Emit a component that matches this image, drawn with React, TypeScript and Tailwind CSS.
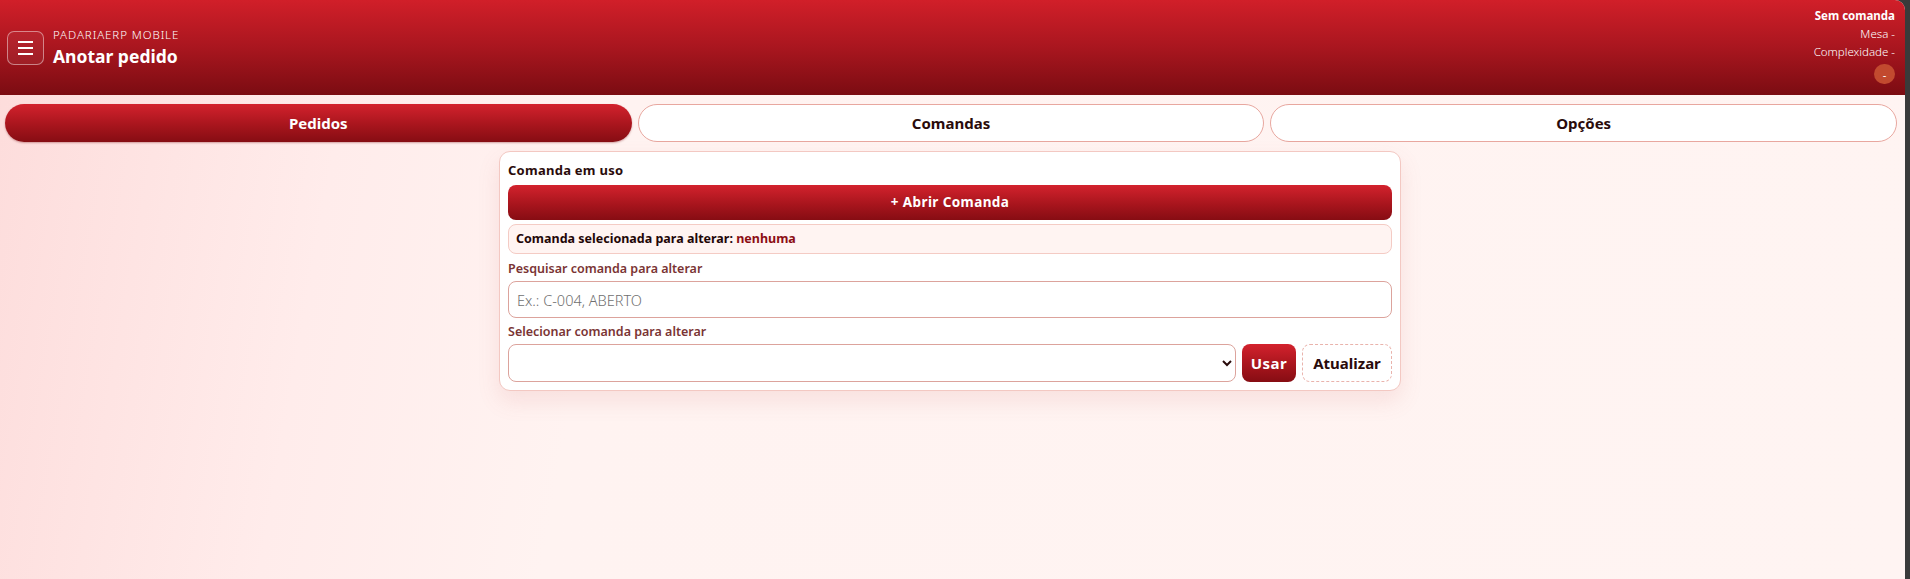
import { useState } from 'react';

type Tab = 'pedidos' | 'comandas' | 'opcoes';

const tabs: { id: Tab; label: string }[] = [
  { id: 'pedidos', label: 'Pedidos' },
  { id: 'comandas', label: 'Comandas' },
  { id: 'opcoes', label: 'Opções' },
];

const redGradient = 'bg-[linear-gradient(180deg,#d3222d_0%,#a8151d_55%,#860d13_100%)]';

export default function App() {
  const [tab, setTab] = useState<Tab>('pedidos');
  const [busca, setBusca] = useState('');

  return (
    <div className="min-h-[579px] bg-[#3a3a3a] pr-[5px] font-['Noto_Sans','Open_Sans',sans-serif]">
      <div className="min-h-[579px] overflow-hidden rounded-tr-[10px] bg-[linear-gradient(100deg,#fddcdb_0%,#ffeceb_18%,#fff3f1_32%,#fff4f2_100%)]">
        <header className="flex h-[95px] items-start justify-between bg-[linear-gradient(180deg,#d11f29_0%,#a9161f_50%,#7b0c12_100%)] pl-[7px] pr-[10px] text-white">
          <div className="mt-[28px] flex items-center gap-[9px]">
            <button className="flex h-[34px] w-[37px] flex-col items-center justify-center gap-[4px] rounded-[7px] border border-white/45 bg-white/5">
              <span className="h-[2px] w-[15px] bg-white" />
              <span className="h-[2px] w-[15px] bg-white" />
              <span className="h-[2px] w-[15px] bg-white" />
            </button>
            <div className="flex flex-col">
              <span className="text-[11.5px] font-light leading-[14px] tracking-[0.08em]">PADARIAERP MOBILE</span>
              <span className="mt-[3px] text-[17.5px] font-bold leading-[22px]">Anotar pedido</span>
            </div>
          </div>
          <div className="mt-[7px] flex flex-col items-end text-[11.5px] leading-[18px]">
            <span className="font-bold">Sem comanda</span>
            <span className="font-light">Mesa -</span>
            <span className="font-light">Complexidade -</span>
            <span className="mt-[3px] flex h-[20px] w-[21px] items-center justify-center rounded-full bg-[#c24a2f] text-[11px] leading-none">
              -
            </span>
          </div>
        </header>

        <nav className="mt-[9px] grid grid-cols-3 gap-[6px] pl-[5px] pr-[8px]">
          {tabs.map((t) =>
            t.id === tab ? (
              <button
                key={t.id}
                onClick={() => setTab(t.id)}
                className={`h-[38px] rounded-full ${redGradient} text-[15px] font-bold text-white shadow-[0_1px_2px_rgba(120,10,15,0.35)]`}
              >
                {t.label}
              </button>
            ) : (
              <button
                key={t.id}
                onClick={() => setTab(t.id)}
                className="h-[38px] rounded-full border border-[#e8a79f] bg-white text-[15px] font-bold text-[#2a0b0b]"
              >
                {t.label}
              </button>
            )
          )}
        </nav>

        <main className="mt-[9px] flex justify-center pr-[5px]">
          <section className="w-[902px] rounded-[11px] border border-[#f3c8c2] bg-white px-[8px] pb-[8px] pt-[9px] shadow-[0_10px_22px_rgba(200,90,90,0.13)]">
            <h2 className="text-[13px] font-bold leading-[18px] tracking-[0.02em] text-[#2a0b0b]">Comanda em uso</h2>
            <button
              className={`mt-[6px] h-[35px] w-full rounded-[8px] ${redGradient} text-[13.5px] font-bold tracking-[0.03em] text-white`}
            >
              + Abrir Comanda
            </button>
            <div className="mt-[4px] flex h-[30px] items-center rounded-[8px] border border-[#f4cbc4] bg-[#fff4f2] px-[7px] text-[12.5px] font-bold text-[#1f0707]">
              Comanda selecionada para alterar:&nbsp;<span className="text-[#8c0d14]">nenhuma</span>
            </div>
            <label className="mt-[6px] block text-[12.5px] font-semibold leading-[18px] text-[#7a3434]">
              Pesquisar comanda para alterar
            </label>
            <input
              value={busca}
              onChange={(e) => setBusca(e.target.value)}
              placeholder="Ex.: C-004, ABERTO"
              className="mt-[3px] h-[37px] w-full rounded-[8px] border border-[#dca39c] bg-white px-[8px] text-[14.5px] font-light text-[#2a0b0b] placeholder-[#6f6f6f] outline-none"
            />
            <label className="mt-[5px] block text-[12.5px] font-semibold leading-[18px] text-[#7a3434]">
              Selecionar comanda para alterar
            </label>
            <div className="mt-[3px] flex gap-[6px]">
              <select className="h-[38px] flex-1 rounded-[8px] border border-[#dca39c] bg-white px-[6px] text-[14px] text-[#2a0b0b] outline-none">
                <option value="" />
              </select>
              <button className={`h-[38px] w-[54px] rounded-[8px] ${redGradient} text-[15px] font-bold tracking-[0.03em] text-white`}>
                Usar
              </button>
              <button className="h-[38px] w-[90px] rounded-[8px] border border-dashed border-[#e9b3ac] bg-transparent text-[15px] font-bold text-[#2a0b0b]">
                Atualizar
              </button>
            </div>
          </section>
        </main>
      </div>
    </div>
  );
}
